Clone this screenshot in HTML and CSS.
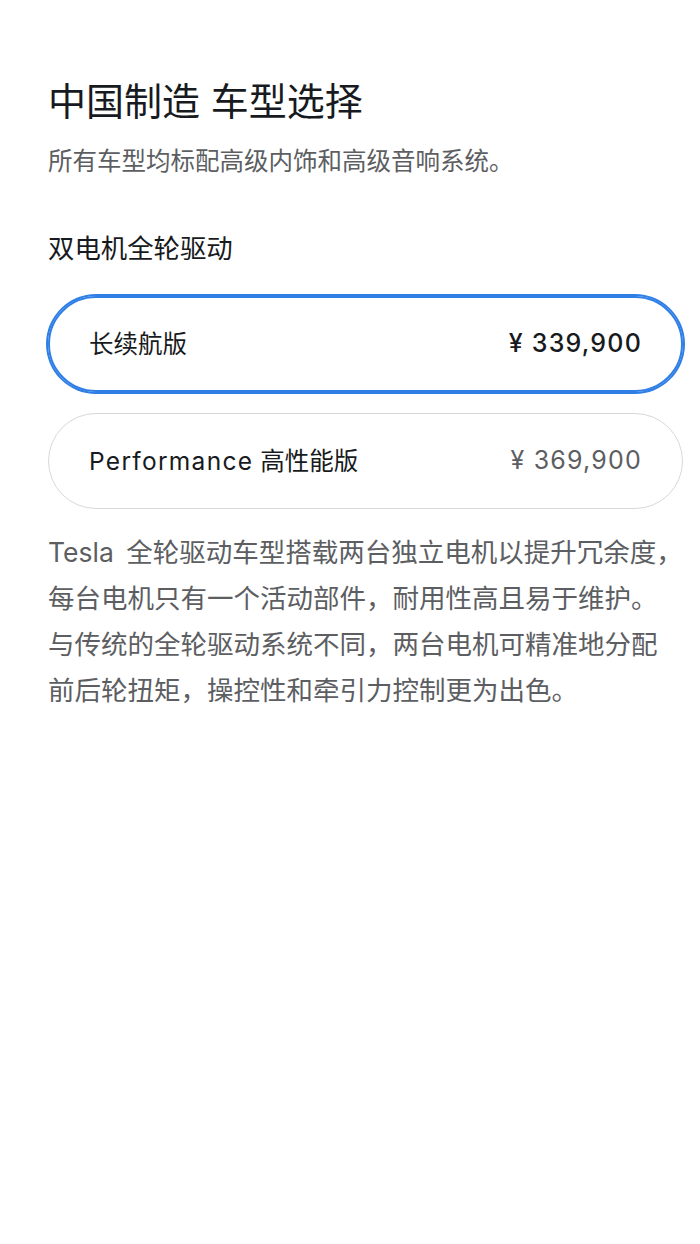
FILE: index.html
```html
<!DOCTYPE html>
<html lang="zh-CN">
<head>
<meta charset="utf-8">
<title>中国制造 车型选择</title>
<link rel="stylesheet" href="styles.css">
</head>
<body>
<main class="page">
  <h1 class="title">中国制造 车型选择</h1>
  <p class="subtitle">所有车型均标配高级内饰和高级音响系统。</p>
  <h2 class="group">双电机全轮驱动</h2>
  <div class="options">
    <div class="option selected">
      <span class="name">长续航版</span>
      <span class="price">¥ 339,900</span>
    </div>
    <div class="option">
      <span class="name"><span class="latin">Performance</span> 高性能版</span>
      <span class="price">¥ 369,900</span>
    </div>
  </div>
  <p class="desc">Tesla 全轮驱动车型搭载两台独立电机以提升冗余度，每台电机只有一个活动部件，耐用性高且易于维护。与传统的全轮驱动系统不同，两台电机可精准地分配前后轮扭矩，操控性和牵引力控制更为出色。</p>
</main>
</body>
</html>
```

FILE: styles.css
```css
html, body {
  margin: 0;
  padding: 0;
  background: #ffffff;
}

body {
  font-family: "Inter", "Noto Sans CJK SC", sans-serif;
  color: #171a20;
}

.page {
  padding: 79px 17px 0 48px;
}

.title {
  margin: 0;
  font-size: 38px;
  line-height: 44px;
  font-weight: 400;
  color: #171a20;
}

.subtitle {
  margin: 22px 0 0;
  font-size: 24.5px;
  line-height: 32px;
  color: #5c5e62;
}

.group {
  margin: 54px 0 0;
  font-size: 26.4px;
  line-height: 34px;
  font-weight: 400;
  color: #171a20;
}

.options {
  margin-top: 31px;
  display: flex;
  flex-direction: column;
  gap: 21px;
}

.option {
  height: 96px;
  box-sizing: border-box;
  border: 1px solid #d8d8d8;
  border-radius: 48px;
  display: flex;
  align-items: center;
  justify-content: space-between;
  padding: 0 40px 3px 40px;
  font-size: 24.5px;
}

.option.selected {
  border: 2px solid #2f7fe6;
  box-shadow: 0 0 0 2px #2f7fe6;
  padding: 0 39px 3px 39px;
}

.option .name {
  color: #171a20;
}

.latin {
  letter-spacing: 1.3px;
}

.option .price {
  color: #5c5e62;
  font-size: 25px;
  letter-spacing: 1.2px;
}

.option.selected .price {
  color: #171a20;
  font-weight: 500;
}

.desc {
  margin: 20px 0 0;
  width: 635px;
  font-size: 26.5px;
  line-height: 46px;
  word-spacing: 5px;
  color: #5c5e62;
}
```
